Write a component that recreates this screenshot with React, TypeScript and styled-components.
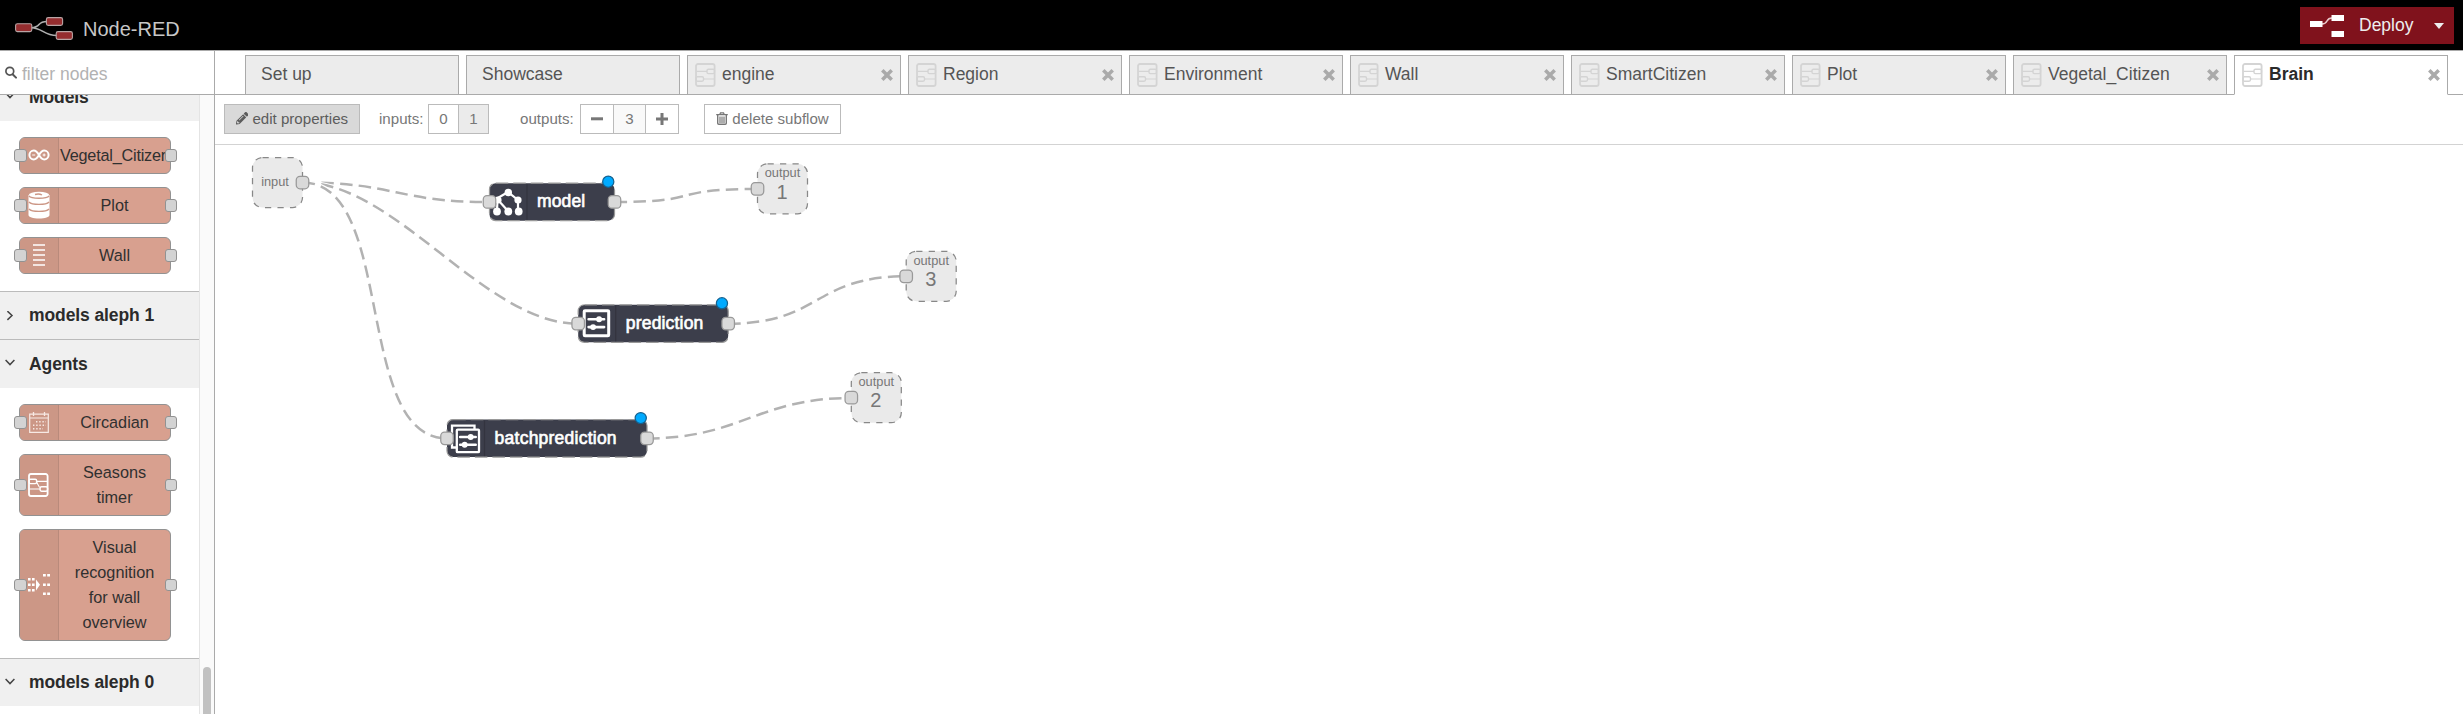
import React from "react";
import styled, { createGlobalStyle, css } from "styled-components";
import { FaPencilAlt } from "react-icons/fa";

const GlobalStyle = createGlobalStyle`
  *, *::before, *::after { box-sizing: border-box; }
  body {
    margin: 0;
    background: #fff;
    color: #555;
    font-family: "Liberation Sans", Arial, sans-serif;
    overflow: hidden;
  }
`;

const Page = styled.div`
  display: flex;
  flex-direction: column;
  width: 100vw;
  height: 714px;
  overflow: hidden;
`;

const Header = styled.header`
  display: flex;
  justify-content: space-between;
  height: 50px;
  background: #000;
`;

const Brand = styled.div`
  display: flex;
  padding: 17px 0 0 15px;
  gap: 10px;
`;

const BrandName = styled.span`
  font-size: 20px;
  line-height: 24px;
  color: #c7c7c7;
`;

const DeployButton = styled.button`
  display: flex;
  align-items: center;
  width: 154px;
  height: 37px;
  margin: 7px 9px 0 0;
  padding: 0 10px;
  border: 0;
  background: #80121c;
  color: #eee;
  font: 17.5px "Liberation Sans", Arial, sans-serif;
  text-align: left;
`;

const DeployLabel = styled.span`
  width: 75px;
  margin-left: 15px;
`;

const Body = styled.div`
  display: flex;
  flex: 1;
  min-height: 0;
  border-top: 1px solid #aaa;
`;

const Palette = styled.aside`
  display: flex;
  flex-direction: column;
  width: 215px;
  border-right: 1px solid #aaa;
`;

const SearchBar = styled.div`
  display: flex;
  height: 44px;
  padding: 15px 0 0 5px;
  border-bottom: 1px solid #aaa;
  color: #b2b2b2;
  font-size: 17.5px;
  line-height: 17px;
  gap: 5px;
`;

const PaletteBody = styled.div`
  display: flex;
  flex: 1;
  min-height: 0;
  overflow: hidden;
`;

const Categories = styled.div`
  width: 199px;
  margin-top: -23px;
`;

const CategoryHeader = styled.div`
  display: flex;
  align-items: center;
  gap: 14px;
  height: 48.5px;
  padding: 1px 0 0 5px;
  border-top: 1px solid #bbb;
  background: #f0f0f0;
  color: #2b2b2b;
  font-size: 17.5px;
  font-weight: bold;
  letter-spacing: -0.1px;
`;

const CategoryNodes = styled.div`
  display: flex;
  flex-direction: column;
  gap: 12.5px;
  padding: 16px 0 16.5px 19px;
`;

const ScrollTrack = styled.div`
  width: 15px;
  padding-left: 3px;
  border-left: 1px solid #e4e4e4;
  background: #fafafa;
`;

const ScrollThumb = styled.div`
  width: 8px;
  height: 60px;
  margin-top: 572px;
  border-radius: 4px;
  background: #c1c1c1;
`;

const PaletteNodeBox = styled.div<{ $lines: number }>`
  position: relative;
  display: flex;
  width: 152px;
  height: ${(p) => p.$lines * 25 + 12.5}px;
  border: 1.25px solid #929292;
  border-radius: 6px;
  background: #d8a08f;
`;

const NodeIconArea = styled.div`
  display: flex;
  align-items: center;
  justify-content: center;
  width: 39px;
  padding-right: 1px;
  border-right: 1px solid #b98a7b;
  border-radius: 5px 0 0 5px;
  background: #cc9786;
`;

const NodeLabel = styled.div<{ $clip?: boolean }>`
  flex: 1;
  padding: 5px 0 0;
  overflow: hidden;
  color: #303030;
  font-size: 16.25px;
  line-height: 25px;
  text-align: center;
  white-space: pre;
  ${(p) =>
    p.$clip &&
    css`
      padding-left: 1px;
      letter-spacing: -0.22px;
      text-align: left;
    `}
`;

const PalettePort = styled.span<{ $side: "left" | "right" }>`
  position: absolute;
  top: calc(50% - 6px);
  ${(p) => (p.$side === "left" ? "left: -6px;" : "right: -7px;")}
  width: 12.5px;
  height: 12.5px;
  border: 1px solid #929292;
  border-radius: 3px;
  background: #d3d3d3;
`;

const Workspace = styled.main`
  display: flex;
  flex-direction: column;
  flex: 1;
  min-width: 0;
`;

const TabBar = styled.div`
  display: flex;
  align-items: flex-end;
  gap: 7px;
  height: 44px;
  padding-left: 30px;
  box-shadow: inset 0 -1px 0 #aaa;
`;

const Tab = styled.div<{ $active?: boolean; $plain?: boolean }>`
  display: flex;
  align-items: center;
  flex: none;
  width: 214px;
  height: 40px;
  padding: 0 7px 0 ${(p) => (p.$plain ? 15 : 7)}px;
  border: 1px solid #aaa;
  border-bottom-color: ${(p) => (p.$active ? "#fff" : "#aaa")};
  background: ${(p) => (p.$active ? "#fff" : "#ececec")};
  color: ${(p) => (p.$active ? "#2b2b2b" : "#555")};
  font-size: 17.5px;
  font-weight: ${(p) => (p.$active ? "bold" : "normal")};
  gap: 6px;
`;

const TabTitle = styled.span`
  flex: 1;
  padding-bottom: 1px;
`;

const Toolbar = styled.div`
  display: flex;
  align-items: flex-start;
  height: 50px;
  padding: 9px 0 0 9px;
  border-bottom: 1px solid #d3d3d3;
  color: #777;
  font-size: 15.1px;
`;

const ToolButton = styled.span<{ $w: number; $bg?: string; $ml?: number; $dark?: boolean }>`
  display: flex;
  align-items: center;
  justify-content: center;
  gap: 4px;
  width: ${(p) => p.$w}px;
  height: 30px;
  margin-left: ${(p) => p.$ml ?? 0}px;
  padding-bottom: 1px;
  border: 1px solid #bbb;
  background: ${(p) => p.$bg ?? "#fff"};
  color: ${(p) => (p.$dark ? "#5c5c5c" : "#777")};
  white-space: nowrap;
`;

const ToolLabel = styled.span<{ $w: number; $ml: number }>`
  width: ${(p) => p.$w}px;
  margin-left: ${(p) => p.$ml}px;
  line-height: 29px;
`;

const Canvas = styled.svg`
  display: block;
  flex: none;
  width: 2248px;
  height: 569px;
  font-family: "Liberation Sans", Arial, sans-serif;
`;

const Logo = () => (
  <svg width="58" height="24" viewBox="15 17 58 24" fill="none">
    <path d="M31 27.7C42 27.7 36 21.5 47 21.5M31 27.7C43 27.7 43 35.5 57 35.5" stroke="#b0b0b0" strokeWidth="1.6" />
    <g fill="#952d2f" stroke="#b9a5a5" strokeWidth="1.1">
      <rect x="15.6" y="23.8" width="16.2" height="7.8" rx="1.8" />
      <rect x="46.4" y="17.6" width="16.2" height="7.8" rx="1.8" />
      <rect x="56.2" y="31.6" width="16.2" height="7.8" rx="1.8" />
    </g>
  </svg>
);

const DeployIcon = () => (
  <svg width="34" height="22" viewBox="0 0 34 22">
    <path d="M12 9C19 9 15 3 22 3" fill="none" stroke="#e8c8ca" strokeWidth="1.6" />
    <path d="M0 6h12.5v6H0zM21.5 0H34v6H21.5zM21.5 16H34v6H21.5z" fill="#fff" />
  </svg>
);

const SearchIcon = () => (
  <svg width="12" height="13" viewBox="0 0 12 13" fill="none" stroke="#555">
    <circle cx="4.8" cy="5.2" r="3.9" strokeWidth="1.7" />
    <path d="M7.6 8.2L11 11.6" strokeWidth="2" strokeLinecap="round" />
  </svg>
);

const CloseIcon = () => (
  <svg width="12" height="12" viewBox="0 0 12 12" stroke="#aaa" strokeWidth="3.5">
    <path d="M1.3 1.3L10.7 10.7M10.7 1.3L1.3 10.7" />
  </svg>
);

const TrashIcon = () => (
  <svg width="12" height="13" viewBox="0 0 12 13" fill="none" stroke="#777">
    <path d="M0.2 2.7H11.8M3.8 2.4L4.5 0.8H7.5L8.2 2.4" strokeWidth="1.3" />
    <path d="M1.7 3V11.2Q1.7 12.3 2.8 12.3H9.2Q10.3 12.3 10.3 11.2V3" strokeWidth="1.4" />
    <path d="M4 4.5V11M6 4.5V11M8 4.5V11" strokeWidth="1.2" />
  </svg>
);

const Chevron = ({ open }: { open: boolean }) => (
  <svg width="10" height="10" viewBox="0 0 10 10" fill="none" stroke="#444" strokeWidth="1.5">
    <path d={open ? "M0.6 1L5 5.6L9.4 1" : "M2.4 0.1L7 4.500L2.4 8.900"} />
  </svg>
);

const SubflowIcon = ({ color, flip }: { color: string; flip?: boolean }) => (
  <svg width="21" height="24" viewBox="0 0 21 24" fill="none" stroke={color}>
    <g transform={flip ? "translate(20.600 0) scale(-1 1)" : undefined}>
      <rect x="1" y="1" width="18.6" height="22" rx="2" strokeWidth="1.8" />
      <path d="M1.5 8.3H12M8.5 16H19" strokeWidth="1.2" />
      <rect x="12" y="6.2" width="7.5" height="4.4" rx="1.4" strokeWidth="1.4" />
      <rect x="1" y="13.8" width="7.5" height="4.4" rx="1.4" strokeWidth="1.4" />
      {flip && <path d="M12 9Q10.500 12 9 14.500" strokeWidth="1.100" />}
    </g>
  </svg>
);

const iconArt: Record<string, React.ReactNode> = {
  arduino: (
    <svg width="22" height="12" viewBox="0 0 22 12" fill="none" stroke="#fff">
      <path d="M11 6C9 2.6 7.6 1.6 5.8 1.6a4.4 4.4 0 0 0 0 8.8C7.6 10.4 9 9.4 11 6C13 2.6 14.4 1.6 16.2 1.6a4.4 4.4 0 0 1 0 8.8C14.4 10.4 13 9.4 11 6Z" strokeWidth="2" />
      <path d="M4.2 6h3M14.6 6h3M16.1 4.5v3" strokeWidth="1" />
    </svg>
  ),
  database: (
    <svg width="22" height="28" viewBox="0 0 22 28">
      <path d="M.5 4V24C.5 26.2 5 27.6 11 27.6S21.5 26.2 21.5 24V4" fill="#fff" />
      <ellipse cx="11" cy="4" rx="10.2" ry="3.2" fill="#fff" />
      <path d="M1 4.9C3 8 19 8 21 4.900M1 11C4 14.200 18 14.200 21 11M1 18C4 21.200 18 21.200 21 18M7 3.5Q11 2.2 14 4" fill="none" stroke="#cc9786" strokeWidth="1.4" />
    </svg>
  ),
  bars: (
    <svg width="12" height="22" viewBox="0 0 12 22" stroke="#fff" strokeWidth="1.7">
      <path d="M0 1H12M0 6H12M0 11H12M0 16H12M0 21H12" />
    </svg>
  ),
  calendar: (
    <svg width="20" height="21" viewBox="0 0 20 21" fill="none" stroke="#f7e9e4">
      <path d="M.7 2.2H19.3V20.3H.7ZM.7 6H19.3" strokeWidth="1.2" />
      <path d="M4.5 0V4M15.5 0V4" strokeWidth="1.3" />
      <path d="M7 9.8H17M4 13.3H17M4 16.8H14" strokeWidth="1.4" strokeDasharray="1.4 1.8" />
    </svg>
  ),
  subflow: <SubflowIcon color="#fff" flip />,
  batch: (
    <svg width="22" height="22" viewBox="0 0 22 22" fill="#fff">
      {[4, 9.5, 15].map((y) => (
        <path key={y} d={`M0 ${y}h2.6v2.6H0zM4 ${y}h2.6v2.6H4z`} />
      ))}
      <path d="M8 5.5V16.5L12 10.8Z" />
      {[0, 9.5, 18.5].map((y) => (
        <path key={y} d={`M15 ${y}h2.8v2.6H15zM19.2 ${y}h2.8v2.6h-2.8z`} />
      ))}
    </svg>
  ),
};

interface PaletteNodeProps {
  icon: string;
  label: string;
  clip?: boolean;
}

const PaletteNode = ({ icon, label, clip }: PaletteNodeProps) => (
  <PaletteNodeBox $lines={label.split("\n").length}>
    <NodeIconArea>{iconArt[icon]}</NodeIconArea>
    <NodeLabel $clip={clip}>{label}</NodeLabel>
    <PalettePort $side="left" />
    <PalettePort $side="right" />
  </PaletteNodeBox>
);

const Category = ({ title, open = true, children }: { title: string; open?: boolean; children?: React.ReactNode }) => (
  <section>
    <CategoryHeader>
      <Chevron open={open} />
      {title}
    </CategoryHeader>
    {children && <CategoryNodes>{children}</CategoryNodes>}
  </section>
);

const Port = ({ x, y }: { x: number; y: number }) => (
  <rect x={x - 6.25} y={y - 6.25} width="12.5" height="12.5" rx="3.75" fill="#d9d9d9" stroke="#999" strokeWidth="1.25" />
);

const Wire = ({ from, to }: { from: [number, number]; to: [number, number] }) => {
  const d = `M${from[0]} ${from[1]}C${from[0] + 93.75} ${from[1]} ${to[0] - 93.75} ${to[1]} ${to[0]} ${to[1]}`;
  return (
    <g fill="none">
      <path d={d} stroke="#fff" strokeWidth="5" />
      <path d={d} stroke="#b2b2b2" strokeWidth="2.5" strokeDasharray="12.5 6.25" />
    </g>
  );
};

interface FlowNodeProps {
  x: number;
  y: number;
  w: number;
  label: string;
  textWidth: number;
  children: React.ReactNode;
}

const FlowNode = ({ x, y, w, label, textWidth, children }: FlowNodeProps) => (
  <g>
    <rect x={x} y={y} width={w} height="37.5" rx="6.25" fill="#3c3e4b" stroke="#999" strokeWidth="1.25" strokeDasharray="12.5 5" />
    <path d={`M${x + 37.5} ${y + 1}V${y + 36.5}`} stroke="#33343f" strokeWidth="1.2" />
    {children}
    <text x={x + 47.6} y={y + 23.9} fontSize="17.5" fill="#fff" stroke="#fff" strokeWidth="0.65" textLength={textWidth}>
      {label}
    </text>
    <Port x={x} y={y + 18.75} />
    <Port x={x + w} y={y + 18.75} />
    <circle cx={x + w - 6.25} cy={y - 1.5} r="5.6" fill="#00aaff" stroke="#14618f" strokeWidth="1.25" />
  </g>
);

const FlowPort = ({ x, y, label, num }: { x: number; y: number; label: string; num?: string }) => (
  <g textAnchor="middle" fill="#777">
    <rect x={x} y={y} width="50" height="50" rx="10" fill="#eaeaea" stroke="#888" strokeWidth="1.25" strokeDasharray="6.25 6.25" />
    <text x={num ? x + 25 : x + 22.5} y={num ? y + 13.5 : y + 28.5} fontSize="12.8">
      {label}
    </text>
    {num && (
      <text x={x + 24.5} y={y + 34.7} fontSize="20">
        {num}
      </text>
    )}
    <Port x={num ? x : x + 50} y={y + 25} />
  </g>
);

const Sliders = ({ x, y }: { x: number; y: number }) => (
  <g stroke="#fff" strokeWidth="2.6" strokeLinecap="round">
    <path d={`M${x} ${y}h15.5M${x} ${y + 7.8}h15.5`} />
    <circle cx={x + 10.5} cy={y} r="2.2" fill="#fff" strokeWidth="1.5" />
    <circle cx={x + 4.5} cy={y + 7.8} r="2.2" fill="#fff" strokeWidth="1.5" />
  </g>
);

const TreeIcon = () => (
  <g fill="#fff" stroke="#fff">
    <path d="M508 192L497 198.5M508 192L518 200V211M497.5 198.5L497 211M498 200L508 211" fill="none" strokeWidth="2.2" />
    <g stroke="none">
      <circle cx="508.3" cy="192.5" r="3.7" />
      <circle cx="498" cy="200" r="3.6" />
      <circle cx="518" cy="200" r="3.6" />
      <circle cx="497" cy="211.5" r="3.9" />
      <circle cx="508.3" cy="211.5" r="3.9" />
      <circle cx="518.7" cy="211.5" r="3.9" />
    </g>
  </g>
);

const tabs = ["Set up", "Showcase", "engine", "Region", "Environment", "Wall", "SmartCitizen", "Plot", "Vegetal_Citizen", "Brain"];

export default function App() {
  return (
    <Page>
      <GlobalStyle />
      <Header>
        <Brand>
          <Logo />
          <BrandName>Node-RED</BrandName>
        </Brand>
        <DeployButton>
          <DeployIcon />
          <DeployLabel>Deploy</DeployLabel>
          <svg width="10" height="6" viewBox="0 0 10 6" fill="#eee">
            <path d="M0 0H10L5 6Z" />
          </svg>
        </DeployButton>
      </Header>
      <Body>
        <Palette>
          <SearchBar>
            <SearchIcon />
            <span>filter nodes</span>
          </SearchBar>
          <PaletteBody>
            <Categories>
              <Category title="Models">
                <PaletteNode icon="arduino" label="Vegetal_Citizen" clip />
                <PaletteNode icon="database" label="Plot" />
                <PaletteNode icon="bars" label="Wall" />
              </Category>
              <Category title="models aleph 1" open={false} />
              <Category title="Agents">
                <PaletteNode icon="calendar" label="Circadian" />
                <PaletteNode icon="subflow" label={"Seasons\ntimer"} />
                <PaletteNode icon="batch" label={"Visual\nrecognition\nfor wall\noverview"} />
              </Category>
              <Category title="models aleph 0" />
            </Categories>
            <ScrollTrack>
              <ScrollThumb />
            </ScrollTrack>
          </PaletteBody>
        </Palette>
        <Workspace>
          <TabBar>
            {tabs.map((name, i) => (
              <Tab key={name} $plain={i < 2} $active={name === "Brain"}>
                {i > 1 && <SubflowIcon color="#d4d4d4" />}
                <TabTitle>{name}</TabTitle>
                {i > 1 && <CloseIcon />}
              </Tab>
            ))}
          </TabBar>
          <Toolbar>
            <ToolButton $w={136} $bg="#d9d9d9" $dark>
              <FaPencilAlt size={12.5} />
              edit properties
            </ToolButton>
            <ToolLabel $w={49} $ml={19}>inputs:</ToolLabel>
            <ToolButton $w={31}>0</ToolButton>
            <ToolButton $w={31} $ml={-1} $bg="#ebebeb">1</ToolButton>
            <ToolLabel $w={60} $ml={31}>outputs:</ToolLabel>
            <ToolButton $w={34}>
              <svg width="12" height="12" viewBox="0 0 12 12">
                <path d="M0 4.3H12V7.3H0Z" fill="#777" />
              </svg>
            </ToolButton>
            <ToolButton $w={33} $ml={-1} $bg="#f9f9f9">3</ToolButton>
            <ToolButton $w={34} $ml={-1}>
              <svg width="12" height="12" viewBox="0 0 12 12">
                <path d="M0 4.5H4.5V0H7.5V4.5H12V7.5H7.5V12H4.5V7.5H0Z" fill="#777" />
              </svg>
            </ToolButton>
            <ToolButton $w={137} $ml={25}>
              <TrashIcon />
              delete subflow
            </ToolButton>
          </Toolbar>
          <Canvas viewBox="215 145 2248 569">
            <Wire from={[302.5, 182.5]} to={[489.5, 202]} />
            <Wire from={[302.5, 182.5]} to={[578, 323.7]} />
            <Wire from={[302.5, 182.5]} to={[447, 438.4]} />
            <Wire from={[614.5, 202]} to={[757.5, 189]} />
            <Wire from={[728, 323.7]} to={[906.5, 276.3]} />
            <Wire from={[647, 438.4]} to={[851.3, 398]} />
            <FlowPort x={252.5} y={157.5} label="input" />
            <FlowPort x={757.5} y={163.8} label="output" num="1" />
            <FlowPort x={906.2} y={251.3} label="output" num="3" />
            <FlowPort x={851.3} y={372.7} label="output" num="2" />
            <FlowNode x={489.5} y={183.2} w={125} label="model" textWidth={48}>
              <TreeIcon />
            </FlowNode>
            <FlowNode x={578.2} y={304.8} w={150} label="prediction" textWidth={77.5}>
              <rect x="584.2" y="310.7" width="24.5" height="25" fill="none" stroke="#fff" strokeWidth="3" rx="0.8" />
              <Sliders x={588.6} y={319.3} />
            </FlowNode>
            <FlowNode x={447} y={419.6} w={200} label="batchprediction" textWidth={122}>
              <path d="M456 447.5H452V425.7H474.5V429.5" fill="none" stroke="#fff" strokeWidth="2.3" />
              <rect x="456.8" y="429.7" width="22.2" height="22.5" fill="#3c3e4b" stroke="#fff" strokeWidth="2.3" rx="0.8" />
              <Sliders x={460.2} y={437} />
            </FlowNode>
          </Canvas>
        </Workspace>
      </Body>
    </Page>
  );
}
